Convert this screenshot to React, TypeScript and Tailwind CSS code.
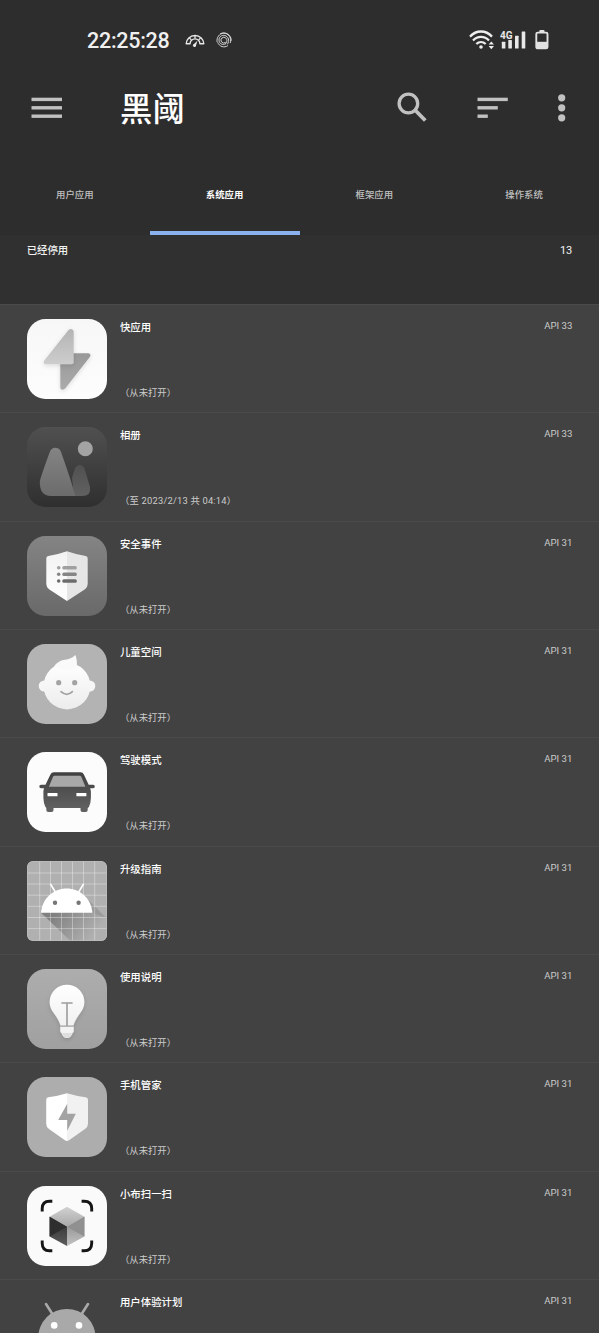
import React from 'react';

type AppRow = {
  id: string;
  name: string;
  usage?: string;
  api: number;
  icon: React.ReactNode;
};

const NEVER = '（从未打开）';

// All launcher icons share an 80x80 canvas
const Icon = ({ children }: { children: React.ReactNode }) => (
  <svg viewBox="0 0 80 80" className="block h-20 w-20 shrink-0">
    {children}
  </svg>
);

type GradProps = { id: string; from: string; to: string; x2?: number; y2?: number };

const Grad = ({ id, from, to, x2 = 0, y2 = 1 }: GradProps) => (
  <linearGradient id={id} x1="0" y1="0" x2={x2} y2={y2}>
    <stop offset="0" stopColor={from} />
    <stop offset="1" stopColor={to} />
  </linearGradient>
);

const QuickAppIcon = () => (
  <Icon>
    <defs>
      <Grad id="quick-bg" from="#f7f7f7" to="#fdfdfd" />
      <Grad id="quick-a" from="#b4b4b4" to="#cdcdcd" />
      <Grad id="quick-b" from="#989898" to="#ababab" />
      <filter id="quick-shadow" x="-30%" y="-30%" width="160%" height="160%">
        <feDropShadow dx="0" dy="1.5" stdDeviation="2" floodColor="#000" floodOpacity="0.13" />
      </filter>
    </defs>
    <rect width="80" height="80" rx="18.5" fill="url(#quick-bg)" />
    <path
      d="M35.3 34.3H61.3Q64.5 34.8 63 37.8L38.2 69.6Q35.5 72 33.3 69.2V36.3Q33.3 34.3 35.3 34.3Z"
      fill="url(#quick-b)"
      filter="url(#quick-shadow)"
    />
    <path
      d="M46.7 12V43.3Q46.7 45.3 44.7 45.3H18.5Q15.5 44.6 17.3 41.6L41.5 11Q44.5 8.6 46.7 12Z"
      fill="url(#quick-a)"
      filter="url(#quick-shadow)"
    />
  </Icon>
);

const GalleryIcon = () => (
  <Icon>
    <defs>
      <Grad id="gallery-bg" from="#505050" to="#2f2f2f" />
      <Grad id="gallery-a" from="#848484" to="#6c6c6c" />
      <Grad id="gallery-b" from="#505050" to="#616161" />
    </defs>
    <rect width="80" height="80" rx="18.5" fill="url(#gallery-bg)" />
    <circle cx="58.3" cy="21.8" r="7.5" fill="#a3a3a3" />
    <path d="M45 51L47.8 41.8Q49.5 38 52.6 38Q56 38 57.6 42L63 60Q64.5 69 55 69H47Z" fill="url(#gallery-b)" />
    <path d="M12.9 54Q13.4 50.5 22.8 25Q24.6 20.8 28.3 20.8Q32.3 20.8 34 25Q44 53 48.4 69H24Q12 68.6 12.9 54Z" fill="url(#gallery-a)" />
  </Icon>
);

const SecurityIcon = () => (
  <Icon>
    <defs>
      <Grad id="sec-bg" from="#848484" to="#696969" />
      <Grad id="sec-left" from="#f2f2f2" to="#ffffff" />
    </defs>
    <rect width="80" height="80" rx="18.5" fill="url(#sec-bg)" />
    <path d="M40 15.3Q30 18.8 21.3 20Q19.3 20.4 19.3 22.5V48Q19.3 51 22 53.2L40 64.9Z" fill="url(#sec-left)" />
    <path d="M40 15.3Q50 18.8 58.7 20Q60.7 20.4 60.7 22.5V48Q60.7 51 58 53.2L40 64.9Z" fill="#e6e6e6" />
    {[31.7, 38.3, 45].map((y, i) => (
      <g key={y} fill={['#a0a0a0', '#858585', '#6c6c6c'][i]}>
        <circle cx="31.7" cy={y} r="1.8" />
        <rect x="35.3" y={y - 1.8} width="14.5" height="3.6" rx="1.5" />
      </g>
    ))}
  </Icon>
);

const KidsIcon = () => (
  <Icon>
    <defs>
      <Grad id="kids-face" from="#ffffff" to="#ececec" />
    </defs>
    <rect width="80" height="80" rx="18.5" fill="#b3b3b3" />
    <circle cx="17.3" cy="42" r="5.6" fill="#f6f6f6" />
    <circle cx="62.7" cy="42" r="5.6" fill="#f6f6f6" />
    <circle cx="40" cy="42" r="23.4" fill="url(#kids-face)" />
    <path d="M27 22.5Q31.5 16.2 38 15.8Q44 15.3 48.3 11Q50.5 15.5 49.8 23L40 27Z" fill="#fafafa" />
    <circle cx="31.7" cy="38.7" r="2.6" fill="#a3a3a3" />
    <circle cx="47.7" cy="38.7" r="2.6" fill="#a3a3a3" />
    <path d="M34 47.6Q39.8 53 45.4 47.6" fill="none" stroke="#a3a3a3" strokeWidth="1.7" strokeLinecap="round" />
  </Icon>
);

const DrivingIcon = () => (
  <Icon>
    <defs>
      <Grad id="car-body" from="#404040" to="#606060" />
    </defs>
    <rect width="80" height="80" rx="18.5" fill="#fcfcfc" />
    <rect x="19.3" y="50" width="7.2" height="10" rx="2" fill="#606060" />
    <rect x="53.5" y="50" width="7.2" height="10" rx="2" fill="#606060" />
    <path
      d="M27 20.3H53.4Q56 20.3 57 22.7L61.7 32.7H66.2Q67.8 32.8 67.8 34.5T66.2 36.2H63.2Q64 38.5 63.9 41V46Q63.7 51.5 62 54.8Q61.3 56 60 56H20.4Q19 56 18.3 54.8Q16.6 51.5 16.4 46V41Q16.3 38.5 17 36.2H14Q12.3 36.2 12.3 34.5T14 32.7H18.5L23.3 22.7Q24.4 20.3 27 20.3Z"
      fill="url(#car-body)"
    />
    <path d="M27.6 23.8H52.7Q53.9 23.8 54.3 24.8L58.4 34.8H21.9L26 24.8Q26.5 23.8 27.6 23.8Z" fill="#a8a8a8" />
    <rect x="20.5" y="41" width="10" height="3.2" rx="0.5" fill="#fff" />
    <rect x="49.4" y="41" width="10" height="3.2" rx="0.5" fill="#fff" />
  </Icon>
);

const GuideIcon = () => (
  <Icon>
    <defs>
      <linearGradient id="guide-shadow" gradientUnits="userSpaceOnUse" x1="28" y1="52" x2="62" y2="80">
        <stop offset="0" stopColor="#808080" />
        <stop offset="1" stopColor="#b0b0b0" />
      </linearGradient>
      <clipPath id="guide-clip">
        <rect width="80" height="80" rx="6" />
      </clipPath>
    </defs>
    <g clipPath="url(#guide-clip)">
      <rect width="80" height="80" fill="#b0b0b0" />
      <path d="M14 51.7L43.5 80H80V57L60 38Z" fill="url(#guide-shadow)" />
      <path d="M60 38L79 57L65.4 51.7Z" fill="#9a9a9a" />
      <path
        d="M12.7 0V80M23.5 0V80M34.5 0V80M45.5 0V80M56.5 0V80M67.7 0V80M0 12H80M0 23H80M0 34.2H80M0 45.3H80M0 56.5H80M0 67.6H80"
        stroke="#fff"
        strokeOpacity="0.38"
        strokeWidth="0.9"
      />
      <rect x="0.4" y="0.4" width="79.2" height="79.2" rx="5.6" fill="none" stroke="#bdbdbd" strokeWidth="0.8" />
    </g>
    <path d="M23.7 23.4L29.2 32.5M56.3 23.4L50.8 32.5" stroke="#fff" strokeWidth="1.7" strokeLinecap="round" />
    <path d="M14 51.7C15 37.5 26.5 27.4 39.7 27.4S64.4 37.5 65.4 51.7Z" fill="#fff" />
    <circle cx="28" cy="41.7" r="2.2" fill="#757575" />
    <circle cx="51.6" cy="41.7" r="2.2" fill="#757575" />
  </Icon>
);

const ManualIcon = () => (
  <Icon>
    <defs>
      <Grad id="manual-bg" from="#adadad" to="#a0a0a0" />
      <Grad id="manual-bulb" from="#ffffff" to="#f1f1f1" />
      <filter id="manual-shadow" x="-30%" y="-30%" width="160%" height="160%">
        <feDropShadow dx="0" dy="2" stdDeviation="2" floodColor="#000" floodOpacity="0.13" />
      </filter>
    </defs>
    <rect width="80" height="80" rx="18.5" fill="url(#manual-bg)" />
    <g filter="url(#manual-shadow)">
      <path d="M40 15.7A17.4 17.4 0 0 1 57.4 33C57.4 42.5 49.5 46 46.5 56.6H33.5C30.5 46 22.6 42.5 22.6 33A17.4 17.4 0 0 1 40 15.7Z" fill="url(#manual-bulb)" />
      <path d="M33.2 57.8H46.8V62.3Q46.8 63.4 45.7 63.7Q44 69 40 69T34.3 63.7Q33.2 63.4 33.2 62.3Z" fill="#f3f3f3" />
      <path d="M35 64H45Q43.6 69 40 69T35 64Z" fill="#dedede" />
    </g>
    <path d="M34.4 34H45.6M40 34V57" stroke="#9c9c9c" strokeWidth="1.6" />
  </Icon>
);

const ManagerIcon = () => (
  <Icon>
    <rect width="80" height="80" rx="18.5" fill="#adadad" />
    <path d="M40 16.3Q30 19.3 21.3 20.3Q19.2 20.6 19.2 23V46.8Q19.2 50 22 52L37.6 62.9Q39 63.9 40 64Z" fill="#fff" />
    <path d="M40 16.3Q50 19.3 58.7 20.3Q61 20.6 61 23V46.8Q61 50 58 52L42.4 62.9Q41 63.9 40 64Z" fill="#f1f1f1" />
    <path d="M40.2 26.7L31.2 43H40.2V53.7L48.8 36.8H40.2Z" fill="#a3a3a3" />
  </Icon>
);

const ScanIcon = () => (
  <Icon>
    <defs>
      <Grad id="scan-top" from="#d2d2d2" to="#a8a8a8" />
      <Grad id="scan-left" from="#2b2b2b" to="#5c5c5c" />
      <Grad id="scan-right" from="#858585" to="#c2c2c2" />
    </defs>
    <rect width="80" height="80" rx="18.5" fill="#fafafa" />
    <path
      d="M25.3 15.2H22.6Q15.2 15.2 15.2 22.6V25.6M54.6 15.2H57.2Q64.7 15.2 64.7 22.6V25.6M15.2 54.6V57.2Q15.2 64.7 22.6 64.7H25.3M64.7 54.6V57.2Q64.7 64.7 57.2 64.7H54.6"
      fill="none"
      stroke="#151515"
      strokeWidth="2.9"
    />
    <path d="M40 20.7L57.4 30.7L40 40.7L22.6 30.7Z" fill="url(#scan-top)" />
    <path d="M22.6 30.7L40 40.7V60L22.6 50.5Z" fill="url(#scan-left)" />
    <path d="M22.6 30.7L40 40.7L22.6 50.5Z" fill="#2e2e2e" />
    <path d="M57.4 30.7L40 40.7V60L57.4 50.5Z" fill="url(#scan-right)" />
    <path d="M57.4 30.7L40 40.7L57.4 50.5Z" fill="#909090" />
  </Icon>
);

const ExperienceIcon = () => (
  <Icon>
    <path d="M19 10L26 21M61 10L54 21" stroke="#a9a9a9" strokeWidth="2.6" strokeLinecap="round" />
    <path d="M11.3 43.5A28.6 28.6 0 0 1 68.5 43.5Z" fill="#a9a9a9" />
    <circle cx="27.2" cy="31.4" r="3.3" fill="#fff" />
    <circle cx="52" cy="31.4" r="3.3" fill="#fff" />
  </Icon>
);

const rows: AppRow[] = [
  { id: 'quick', name: '快应用', usage: NEVER, api: 33, icon: <QuickAppIcon /> },
  { id: 'gallery', name: '相册', usage: '（至 2023/2/13 共 04:14）', api: 33, icon: <GalleryIcon /> },
  { id: 'security', name: '安全事件', usage: NEVER, api: 31, icon: <SecurityIcon /> },
  { id: 'kids', name: '儿童空间', usage: NEVER, api: 31, icon: <KidsIcon /> },
  { id: 'driving', name: '驾驶模式', usage: NEVER, api: 31, icon: <DrivingIcon /> },
  { id: 'guide', name: '升级指南', usage: NEVER, api: 31, icon: <GuideIcon /> },
  { id: 'manual', name: '使用说明', usage: NEVER, api: 31, icon: <ManualIcon /> },
  { id: 'manager', name: '手机管家', usage: NEVER, api: 31, icon: <ManagerIcon /> },
  { id: 'scan', name: '小布扫一扫', usage: NEVER, api: 31, icon: <ScanIcon /> },
  { id: 'experience', name: '用户体验计划', api: 31, icon: <ExperienceIcon /> },
];

const tabs = ['用户应用', '系统应用', '框架应用', '操作系统'];

const StatusBar = () => (
  <div className="flex h-[80px] items-center pl-[87px] pr-[50px] text-[#f0f0f0]">
    <span className="mt-[2px] w-[83px] whitespace-nowrap text-[21.5px] leading-none font-medium tracking-[-0.28px]">22:25:28</span>
    <svg viewBox="0 0 20 14" className="ml-[15px] h-[14px] w-[20px]" fill="none" stroke="#e8e8e8">
      <path d="M1.2 10.8A8.8 8.3 0 0 1 18.8 10.8H14.9A4.9 4.9 0 0 0 5.1 10.8Z" strokeWidth="1.4" strokeLinejoin="round" />
      <path d="M4.4 4.9L6.3 6.9M10 3V5.6M15.6 4.9L13.7 6.9" strokeWidth="1.3" />
      <path d="M12.4 7.8L11.1 12.3A1.6 1.6 0 1 1 9 10.9Z" fill="#e8e8e8" stroke="none" />
    </svg>
    <svg viewBox="0 0 16 16" className="ml-[11px] h-[16px] w-[16px]" fill="none" stroke="#dcdcdc" strokeWidth="0.95" strokeLinecap="round">
      <path d="M9.4 10.6A2.9 2.9 0 1 1 9.8 6C11.6 7.6 11.2 10.6 9.4 11.9" />
      <path d="M9.4 11.9C6.6 13.7 3 11.6 3 8C3 4.6 6 2.8 8.8 3.5C12.6 4.6 13.8 8.8 11.6 12" />
      <path d="M1 9.6C0.4 5.6 3.4 1.4 7.6 1.2C12.6 1 15.8 6.2 14.4 10.6" />
      <path d="M1.8 10.6C3.2 14.6 8.2 16.2 11.6 13.8M4.6 1.6C9.6 -0.8 15.6 3 15.2 8.4" />
    </svg>

    <svg viewBox="0 0 25 20" className="ml-auto h-[20px] w-[25px]" fill="none" stroke="#eeeeee" strokeWidth="2.3">
      <path d="M1 6.6C7.3 -0.2 16.7 -0.2 23 6.6" />
      <path d="M4 10.5C8.6 5.6 15.4 5.6 20 10.5" />
      <path d="M7.3 14C10 11.6 14 11.6 16.7 14" />
      <circle cx="12" cy="17" r="1.8" fill="#eeeeee" stroke="none" />
      <path d="M22.3 11.5L25 14.5H19.6ZM22.3 19.2L25 16.1H19.6Z" fill="#eeeeee" stroke="none" />
    </svg>
    <svg viewBox="0 0 26 20" className="ml-[6px] h-[20px] w-[26px]" fill="#e8e8e8">
      <text x="0" y="9" className="font-['Roboto'] text-[11.5px] font-bold" textLength="12.5" lengthAdjust="spacingAndGlyphs">4G</text>
      <rect x="1.8" y="11.7" width="3.6" height="6.8" rx="0.5" />
      <rect x="8.3" y="10" width="3.6" height="8.5" rx="0.5" />
      <rect x="15" y="5.8" width="3.6" height="12.7" rx="0.5" />
      <rect x="21.7" y="1.6" width="3.6" height="16.9" rx="0.5" />
    </svg>
    <svg viewBox="0 0 14 20" className="ml-[9px] h-[20px] w-[14px]">
      <rect x="4.3" y="0" width="5.2" height="3" rx="1" fill="#e2e2e2" />
      <rect x="1.3" y="2.6" width="11.2" height="15.8" rx="1.4" fill="none" stroke="#e2e2e2" strokeWidth="1.9" />
      <rect x="2" y="11.8" width="10" height="6.5" fill="#e2e2e2" />
    </svg>
  </div>
);

const Toolbar = () => (
  <div className="flex h-[76px] items-start pt-[8px] pl-[31px]">
    <svg viewBox="0 0 32 40" className="mt-px h-[40px] w-[32px]" fill="#c1c1c1">
      <rect x="0.5" y="8.7" width="30.5" height="3.4" />
      <rect x="0.5" y="17.1" width="30.5" height="3.4" />
      <rect x="0.5" y="25.5" width="30.5" height="3.4" />
    </svg>
    <h1 className="mt-[2px] ml-[57px] w-[66.5px] text-[32.4px] leading-[40px] font-medium whitespace-nowrap text-white">黑阈</h1>
    <svg viewBox="0 0 32 32" className="ml-[209.5px] mt-[3px] h-[32px] w-[32px]" fill="none" stroke="#c1c1c1">
      <circle cx="12.4" cy="12.5" r="9.3" strokeWidth="3.3" />
      <path d="M19 19L29.3 29.5" strokeWidth="3.8" />
    </svg>
    <svg viewBox="0 0 32 40" className="ml-[47.5px] mt-px h-[40px] w-[32px]" fill="#c1c1c1">
      <rect x="1.5" y="8.7" width="30.3" height="3.4" />
      <rect x="1.5" y="17.1" width="20.3" height="3.4" />
      <rect x="1.5" y="25.5" width="10.3" height="3.4" />
    </svg>
    <svg viewBox="0 0 8 40" className="ml-[50.5px] mt-px h-[40px] w-[8px]" fill="#c1c1c1">
      <circle cx="3.7" cy="8.8" r="3.6" />
      <circle cx="3.7" cy="18.8" r="3.6" />
      <circle cx="3.7" cy="28.8" r="3.6" />
    </svg>
  </div>
);

export default function App() {
  const activeTab = 1;

  return (
    <div className="h-[1333px] w-[599px] overflow-hidden bg-[#424242] font-['Roboto','Noto_Sans_CJK_SC',sans-serif]">
      <header className="h-[235px] bg-[#2d2d2d]">
        <StatusBar />
        <Toolbar />
        <nav className="grid h-[79px] grid-cols-4">
          {tabs.map((tab, i) => (
            <div
              key={tab}
              className={
                i === activeTab
                  ? 'flex items-center justify-center border-b-[4px] border-[#8ab0ee] pt-[3px] text-[9.4px] font-bold text-white'
                  : 'flex items-center justify-center border-b-[4px] border-transparent pt-[3px] text-[9.4px] font-medium text-[#c0c0c0]'
              }
            >
              {tab}
            </div>
          ))}
        </nav>
      </header>

      <div className="flex h-[69px] justify-between bg-[#303030] px-[26.7px] pt-[8px] text-[10.4px] leading-[16px] font-medium text-[#f2f2f2]">
        <span>已经停用</span>
        <span className="text-[11px] font-normal">13</span>
      </div>

      <ul>
        {rows.map((row) => (
          <li key={row.id} className="flex h-[108.33px] border-t-[1.5px] border-[#4a4a4a] px-[26.6px] pt-[14px]">
            {row.icon}
            <div className="ml-[13.4px] flex h-20 flex-1 flex-col justify-between">
              <span className="text-[10.4px] leading-[17px] font-medium text-white">{row.name}</span>
              {row.usage && (
                <span
                  className={
                    row.usage === NEVER
                      ? 'mb-[-2px] text-[9.35px] leading-[16px] text-[#cccccc]'
                      : 'mb-[-2px] text-[9.35px] leading-[16px] tracking-[0.2px] text-[#cccccc]'
                  }
                >
                  {row.usage}
                </span>
              )}
            </div>
            <span className="mt-[-1px] text-[9.6px] leading-[16px] text-[#cacaca]">API {row.api}</span>
          </li>
        ))}
      </ul>
    </div>
  );
}
